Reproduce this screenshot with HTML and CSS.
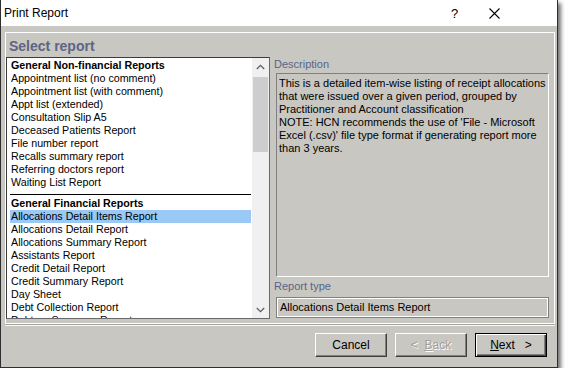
FILE: index.html
```html
<!DOCTYPE html>
<html lang="en">
<head>
    <meta charset="UTF-8">
    <title>Print Report</title>
    <link rel="stylesheet" href="styles.css">
</head>
<body>
    <div class="window">
        <div class="titlebar">
            <span class="title">Print Report</span>
            <span class="help">?</span>
            <span class="close">
                <svg width="11" height="11" viewBox="0 0 11 11"><path d="M0.5 0.5 L10.5 10.5 M10.5 0.5 L0.5 10.5" stroke="#000" stroke-width="1.1" fill="none"/></svg>
            </span>
        </div>

        <div class="client">
            <div class="group">
                <div class="leftCol">
                    <h1 class="heading">Select report</h1>
                    <div class="listbox">
                        <div class="items">
                            <div class="row head">General Non-financial Reports</div>
                            <div class="row">Appointment list (no comment)</div>
                            <div class="row">Appointment list (with comment)</div>
                            <div class="row">Appt list (extended)</div>
                            <div class="row">Consultation Slip A5</div>
                            <div class="row">Deceased Patients Report</div>
                            <div class="row">File number report</div>
                            <div class="row">Recalls summary report</div>
                            <div class="row">Referring doctors report</div>
                            <div class="row">Waiting List Report</div>
                            <div class="sep"></div>
                            <div class="row head">General Financial Reports</div>
                            <div class="row selected">Allocations Detail Items Report</div>
                            <div class="row">Allocations Detail Report</div>
                            <div class="row">Allocations Summary Report</div>
                            <div class="row">Assistants Report</div>
                            <div class="row">Credit Detail Report</div>
                            <div class="row">Credit Summary Report</div>
                            <div class="row">Day Sheet</div>
                            <div class="row">Debt Collection Report</div>
                            <div class="row">Debtors Summary Report</div>
                        </div>
                        <div class="scrollbar">
                            <div class="arrow">
                                <svg width="9" height="6" viewBox="0 0 9 6"><path d="M0.8 5 L4.5 1.3 L8.2 5" stroke="#606060" stroke-width="1.3" fill="none"/></svg>
                            </div>
                            <div class="track"><div class="thumb"></div></div>
                            <div class="arrow">
                                <svg width="9" height="6" viewBox="0 0 9 6"><path d="M0.8 1 L4.5 4.7 L8.2 1" stroke="#606060" stroke-width="1.3" fill="none"/></svg>
                            </div>
                        </div>
                    </div>
                </div>

                <div class="rightCol">
                    <div class="label">Description</div>
                    <div class="descBox">
                        This is a detailed item-wise listing of receipt allocations<br>
                        that were issued over a given period, grouped by<br>
                        Practitioner and Account classification<br>
                        NOTE: HCN recommends the use of 'File - Microsoft<br>
                        Excel (.csv)' file type format if generating report more<br>
                        than 3 years.
                    </div>
                    <div class="label typeLabel">Report type</div>
                    <div class="typeBox">Allocations Detail Items Report</div>
                </div>
            </div>

            <div class="footer">
                <button class="btn">Cancel</button>
                <button class="btn disabled">&lt;&nbsp;&nbsp;<u>B</u>ack</button>
                <button class="btn default"><u>N</u>ext&nbsp;&nbsp;&nbsp;&gt;</button>
            </div>
        </div>
    </div>
</body>
</html>
```

FILE: styles.css
```css
*{
    margin: 0;
    padding: 0;
    box-sizing: border-box;
}

body{
    background: #fff;
    font-family: "Liberation Sans", Arial, sans-serif;
    font-size: 11px;
    color: #000;
}

.window{
    width: 558px;
    height: 368px;
    border: 1px solid #2e2e2e;
    border-top: 0;
    box-shadow: 3px 3px 4px rgba(0, 0, 0, 0.55);
    display: flex;
    flex-direction: column;
    background: #c9c7c1;
}

.titlebar{
    height: 26px;
    background: #fff;
    display: flex;
    align-items: center;
    padding-left: 3px;
    font-size: 12px;
}

.title{
    flex: 1;
}

.help{
    width: 10px;
    margin-right: 28px;
    font-size: 13px;
}

.close{
    display: flex;
    margin-right: 57px;
}

.client{
    flex: 1;
    display: flex;
    flex-direction: column;
    padding: 6px 2px 0 4px;
}

.group{
    height: 292px;
    border: 1px solid #fff;
    box-shadow: 0 1px 0 #a4a29c, 0 2px 0 #fbfbfb;
    display: flex;
}

.leftCol{
    display: flex;
    flex-direction: column;
}

.heading{
    font-size: 14px;
    font-weight: bold;
    color: #5c6585;
    line-height: 17px;
    padding: 5px 0 0 3px;
    margin-bottom: 2px;
}

.listbox{
    width: 264px;
    height: 262px;
    border: 1px solid #6a6a6a;
    border-top-color: #3c3c3c;
    border-left-color: #3c3c3c;
    background: #fff;
    display: flex;
    overflow: hidden;
}

.items{
    flex: 1;
    padding: 1px 1px 0 3px;
    overflow: hidden;
    font-size: 10.7px;
}

.row{
    height: 13px;
    line-height: 13px;
    padding-left: 1px;
    white-space: nowrap;
}

.row.head{
    font-weight: bold;
}

.row.selected{
    background: #99c9f4;
}

.sep{
    height: 8px;
    padding-top: 5px;
}

.sep::after{
    content: "";
    display: block;
    height: 1px;
    background: #000;
}

.scrollbar{
    width: 17px;
    background: #f0f0f0;
    display: flex;
    flex-direction: column;
}

.arrow{
    height: 17px;
    display: flex;
    align-items: center;
    justify-content: center;
}

.track{
    flex: 1;
    padding: 2px 1px;
}

.thumb{
    height: 75px;
    background: #cdcdcd;
}

.rightCol{
    margin-left: 4px;
    padding-top: 25px;
    display: flex;
    flex-direction: column;
}

.label{
    color: #56658c;
    line-height: 13px;
}

.descBox{
    margin: 2px 0 0 2px;
    width: 273px;
    height: 204px;
    border: 1px solid #fff;
    border-top-color: #808080;
    border-left-color: #808080;
    padding: 3px 2px;
    line-height: 13px;
    white-space: nowrap;
}

.typeLabel{
    margin-top: 3px;
}

.typeBox{
    margin: 4px 0 0 2px;
    width: 273px;
    height: 21px;
    border: 1px solid #808080;
    box-shadow: inset 0 0 0 1px #fff;
    padding-left: 3px;
    line-height: 19px;
}

.footer{
    display: flex;
    justify-content: flex-end;
    gap: 8px;
    padding: 9px 8px 0 0;
}

.btn{
    width: 72px;
    height: 24px;
    background: #c9c7c1;
    border: 1px solid #404040;
    border-top-color: #fff;
    border-left-color: #fff;
    box-shadow: inset -1px -1px 0 #808080;
    font-family: "Liberation Sans", Arial, sans-serif;
    font-size: 12px;
    color: #000;
}

.btn u{
    text-decoration: underline;
}

.btn.disabled{
    color: #a2a09b;
    text-shadow: 1px 1px 0 #fff;
}

.btn.default{
    border: 1px solid #000;
    box-shadow: inset 1px 1px 0 #fff, inset -1px -1px 0 #404040, inset -2px -2px 0 #808080;
}
```
